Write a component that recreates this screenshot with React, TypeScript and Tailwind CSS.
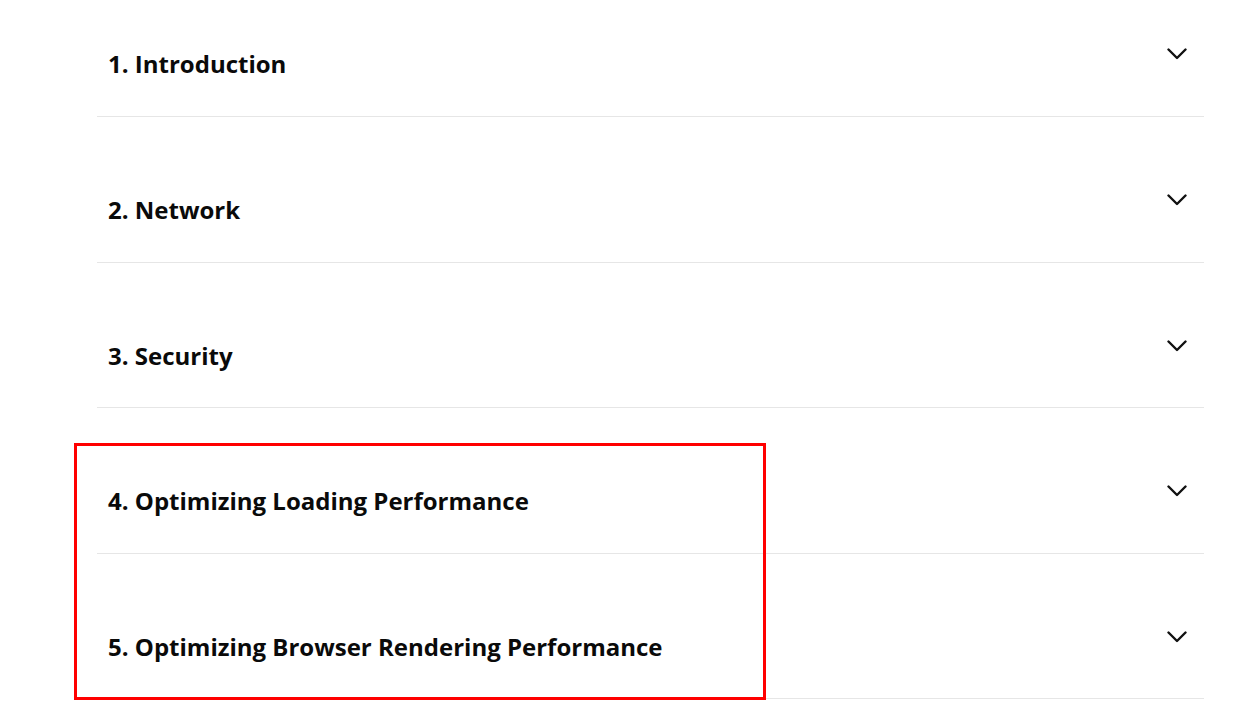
const sections = [
  "1. Introduction",
  "2. Network",
  "3. Security",
  "4. Optimizing Loading Performance",
  "5. Optimizing Browser Rendering Performance",
];

const heights = ["h-[146px]", "h-[146px]", "h-[145px]", "h-[146px]", "h-[145px]"];

function Chevron() {
  return (
    <svg width="20" height="12" viewBox="0 0 20 12" fill="none" className="shrink-0">
      <polyline points="1.5,1.5 10,10 18.5,1.5" stroke="#111" strokeWidth="2.4" strokeLinecap="round" strokeLinejoin="round" />
    </svg>
  );
}

export default function App() {
  return (
    <div className="relative h-[711px] w-[1256px] overflow-hidden bg-white" style={{ fontFamily: "'Open Sans', Lato, sans-serif" }}>
      <div className="-mt-[29px] ml-[97px] w-[1107px]">
        {sections.map((title, i) => (
          <div key={title} className={`relative border-b border-[#e6e6e6] ${heights[i]}`}>
            <div className="absolute left-[11px] top-[78px] text-[24px] leading-[30px] font-bold text-[#0a0a0a]">{title}</div>
            <div className="absolute right-[17px] top-[77px]">
              <Chevron />
            </div>
          </div>
        ))}
      </div>
      <div className="pointer-events-none absolute left-[74px] top-[443px] h-[257px] w-[692px] border-[3px] border-[#ff0000]" />
    </div>
  );
}
